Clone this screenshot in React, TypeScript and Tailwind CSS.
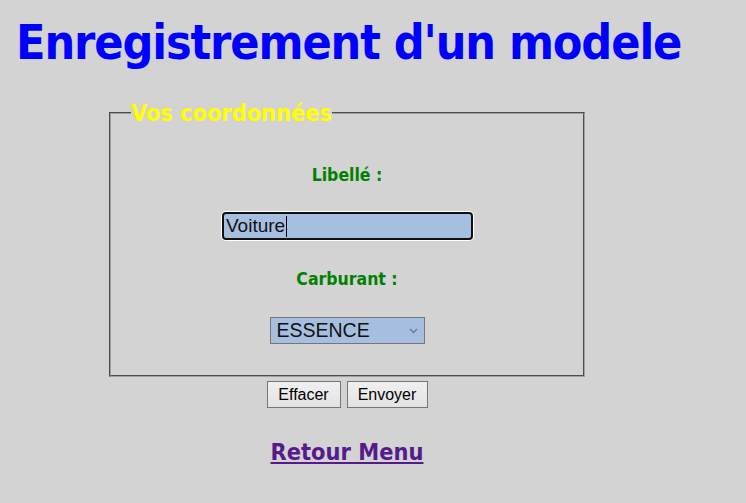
export default function App() {
  return (
    <div className="min-h-[503px] w-full bg-[#d3d3d3] pt-[14px] [font-family:'DejaVu_Sans_Condensed','DejaVu_Sans',sans-serif]">
      <h1 className="ml-[16px] whitespace-nowrap text-[48px] font-bold leading-[56px] tracking-[-1.1px] text-[#0000ff]">
        Enregistrement d'un modele
      </h1>
      <div className="ml-[109px] mt-[31px] w-[476px] text-center">
        <fieldset className="h-[276px] border-2 border-[#a0a0a0] [border-style:groove] pl-[20px] pr-[20px]">
          <legend className="px-0 text-left text-[23.3px] font-bold leading-[24px] text-[#ffff00]">
            Vos coordonnées
          </legend>
          <div className="mt-[40px] text-[17.5px] font-bold leading-[20px] text-[#008000]">
            Libellé :
          </div>
          <div className="mt-[27px] flex justify-center">
            <div className="ml-[1px] flex h-[28px] w-[251px] items-center rounded-[4px] border-2 border-[#101010] bg-[#a6bfe0] pl-[2px] shadow-[0_0_0_1px_#ffffff] [font-family:'Liberation_Sans',Arial,sans-serif] text-[19px] text-[#111]">
              <span>Voiture</span>
              <span className="ml-[1px] h-[21px] w-[1px] bg-black" />
            </div>
          </div>
          <div className="mt-[29px] text-[17.5px] font-bold leading-[20px] text-[#008000]">
            Carburant :
          </div>
          <div className="mt-[28px] flex justify-center">
            <div className="relative flex h-[27px] w-[155px] items-center border border-[#767676] bg-[#a6bfe0] pl-[6px] [font-family:'Liberation_Sans',Arial,sans-serif] text-[19.5px] text-[#111]">
              <span>ESSENCE</span>
              <svg className="absolute right-[6px] top-[10px]" width="9" height="6" viewBox="0 0 9 6">
                <path d="M1 1 L4.5 4.5 L8 1" fill="none" stroke="#6b7a90" strokeWidth="1.4" />
              </svg>
            </div>
          </div>
        </fieldset>
        <div className="mt-[4px] flex justify-center gap-[6px] [font-family:'Liberation_Sans',Arial,sans-serif] text-[16px] text-black">
          <button className="h-[27px] w-[74px] border border-[#767676] bg-[linear-gradient(#f0f0f0,#e3e3e3)]">Effacer</button>
          <button className="h-[27px] w-[81px] border border-[#767676] bg-[linear-gradient(#f0f0f0,#e3e3e3)]">Envoyer</button>
        </div>
        <div className="mt-[30px]">
          <a href="#" className="text-[23.4px] font-bold leading-[28px] text-[#551a8b] underline">
            Retour Menu
          </a>
        </div>
      </div>
    </div>
  );
}
